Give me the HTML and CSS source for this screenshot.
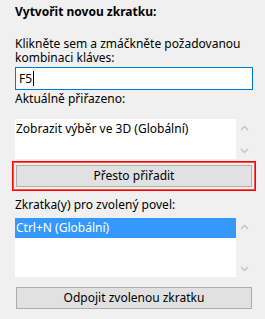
FILE: index.html
```html
<!DOCTYPE html>
<html>
<head>
<meta charset="utf-8">
<link rel="stylesheet" href="styles.css">
</head>
<body>
<div class="panel">
  <div class="title">Vytvořit novou zkratku:</div>
  <div class="label wrap">Klikněte sem a zmáčkněte požadovanou kombinaci kláves:</div>
  <div class="input"><span>F5</span><span class="caret"></span></div>
  <div class="label cur">Aktuálně přiřazeno:</div>
  <div class="listrow l1">
    <div class="list"><div class="item">Zobrazit výběr ve 3D (Globální)</div></div>
    <div class="sb">
      <svg width="9" height="6" viewBox="0 0 9 6"><path d="M1 5 L4.5 1.5 L8 5" fill="none" stroke="#c4c4c4" stroke-width="1.4"/></svg>
      <svg width="9" height="6" viewBox="0 0 9 6"><path d="M1 1 L4.5 4.5 L8 1" fill="none" stroke="#c4c4c4" stroke-width="1.4"/></svg>
    </div>
  </div>
  <div class="focus"><div class="btn">Přesto přiřadit</div></div>
  <div class="label sel">Zkratka(y) pro zvolený povel:</div>
  <div class="listrow l2">
    <div class="list"><div class="item selected">Ctrl+N (Globální)</div></div>
    <div class="sb">
      <svg width="9" height="6" viewBox="0 0 9 6"><path d="M1 5 L4.5 1.5 L8 5" fill="none" stroke="#c4c4c4" stroke-width="1.4"/></svg>
      <svg width="9" height="6" viewBox="0 0 9 6"><path d="M1 1 L4.5 4.5 L8 1" fill="none" stroke="#c4c4c4" stroke-width="1.4"/></svg>
    </div>
  </div>
  <div class="btn b2">Odpojit zvolenou zkratku</div>
</div>
</body>
</html>
```
FILE: styles.css
```css
html, body {
  margin: 0;
  padding: 0;
  background: #f0f0f0;
}
body {
  width: 265px;
  height: 319px;
  overflow: hidden;
  font-family: "Noto Sans", "Open Sans", sans-serif;
  font-size: 12px;
  color: #000;
}
.panel {
  display: flex;
  flex-direction: column;
  padding: 4px 0 0 15px;
  width: 238px;
}
.title {
  font-weight: bold;
  line-height: 16px;
  height: 16px;
}
.label {
  line-height: 16px;
}
.wrap {
  margin-top: 17px;
  line-height: 14px;
  width: 230px;
}
.input {
  margin-top: 2px;
  height: 21px;
  border: 1px solid #0078d7;
  background: #fff;
  display: flex;
  align-items: center;
  padding-left: 3px;
}
.caret {
  display: inline-block;
  width: 1px;
  height: 15px;
  background: #000;
  margin-left: 1px;
}
.cur {
  margin-top: 1px;
}
.listrow {
  display: flex;
}
.l1 {
  margin-top: 12px;
  height: 40px;
}
.l2 {
  margin-top: 5px;
  height: 59px;
}
.list {
  width: 222px;
  background: #fff;
}
.item {
  line-height: 20px;
  height: 20px;
  padding-left: 1px;
}
.selected {
  background: #3399ff;
  color: #fff;
}
.sb {
  width: 17px;
  display: flex;
  flex-direction: column;
  justify-content: space-between;
  align-items: center;
  padding: 6px 0 5px;
}
.focus {
  margin: 2px 0 0 -3px;
  width: 236px;
  border: 1px solid #ff0000;
  box-shadow: inset 0 0 0 1px #ff5050;
  padding: 3px;
}
.btn {
  height: 20px;
  line-height: 20px;
  border: 1px solid #adadad;
  background: #e1e1e1;
  text-align: center;
}
.sel {
  margin-top: 6px;
}
.b2 {
  margin-top: 10px;
  margin-left: 1px;
  width: 234px;
}
```
